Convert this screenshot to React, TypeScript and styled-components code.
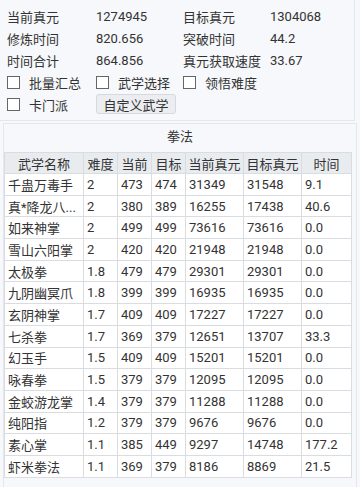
import styled, { createGlobalStyle } from 'styled-components';

const GlobalStyle = createGlobalStyle`
  body {
    margin: 0;
    background: #f6f8fb;
    font-family: Roboto, "Noto Sans CJK SC", sans-serif;
    color: #333;
  }
`;

const Page = styled.div`
  width: 360px;
  height: 487px;
  overflow: hidden;
`;

const TopPanel = styled.div`
  width: 347px;
  padding: 5px 0 5px 7px;
  border-right: 1px solid #e4e7eb;
  border-bottom: 1px solid #e4e7eb;
  display: grid;
  grid-template-columns: 89px 87px 87px 1fr;
  grid-auto-rows: 22px;
  font-size: 13px;
  align-items: center;
`;

const Cell = styled.div`
  white-space: nowrap;
`;

const Check = styled.label`
  display: flex;
  align-items: center;
  gap: 9px;
  white-space: nowrap;
  grid-column: span ${p => p.$span || 1};
`;

const Box = styled.span`
  width: 11px;
  height: 11px;
  border: 1px solid #666;
  background: #fff;
  flex-shrink: 0;
`;

const Button = styled.button`
  font: inherit;
  font-size: 13px;
  color: #333;
  height: 20px;
  width: 80px;
  padding: 0;
  background: #ebedf0;
  border: 1px solid #d5d8dc;
  border-radius: 3px;
  justify-self: start;
`;

const Section = styled.div`
  margin: 2px 3px 0 3px;
  border: 1px solid #e4e7eb;
  height: 380px;
`;

const Title = styled.div`
  height: 28px;
  line-height: 26px;
  text-align: center;
  font-size: 13px;
`;

const Table = styled.table`
  border-collapse: collapse;
  table-layout: fixed;
  width: 347px;
  font-size: 13px;
  background: #fff;
`;

const Th = styled.th`
  font-weight: normal;
  background: #e9ecef;
  border: 1px solid #d9dde1;
  height: 20px;
  padding: 0;
  text-align: center;
  white-space: nowrap;
`;

const Td = styled.td`
  border: 1px solid #d9dde1;
  height: 20.7px;
  padding: 0 3px;
  white-space: nowrap;
  overflow: hidden;
`;

const widths = [79, 34, 34, 34, 58, 58, 50];
const heads = ['武学名称', '难度', '当前', '目标', '当前真元', '目标真元', '时间'];

const rows = [
  ['千蛊万毒手', '2', '473', '474', '31349', '31548', '9.1'],
  ['真*降龙八...', '2', '380', '389', '16255', '17438', '40.6'],
  ['如来神掌', '2', '499', '499', '73616', '73616', '0.0'],
  ['雪山六阳掌', '2', '420', '420', '21948', '21948', '0.0'],
  ['太极拳', '1.8', '479', '479', '29301', '29301', '0.0'],
  ['九阴幽冥爪', '1.8', '399', '399', '16935', '16935', '0.0'],
  ['玄阴神掌', '1.7', '409', '409', '17227', '17227', '0.0'],
  ['七杀拳', '1.7', '369', '379', '12651', '13707', '33.3'],
  ['幻玉手', '1.5', '409', '409', '15201', '15201', '0.0'],
  ['咏春拳', '1.5', '379', '379', '12095', '12095', '0.0'],
  ['金蛟游龙掌', '1.4', '379', '379', '11288', '11288', '0.0'],
  ['纯阳指', '1.2', '379', '379', '9676', '9676', '0.0'],
  ['素心掌', '1.1', '385', '449', '9297', '14748', '177.2'],
  ['虾米拳法', '1.1', '369', '379', '8186', '8869', '21.5'],
];

export default function App() {
  return (
    <Page>
      <GlobalStyle />
      <TopPanel>
        <Cell>当前真元</Cell>
        <Cell>1274945</Cell>
        <Cell>目标真元</Cell>
        <Cell>1304068</Cell>
        <Cell>修炼时间</Cell>
        <Cell>820.656</Cell>
        <Cell>突破时间</Cell>
        <Cell>44.2</Cell>
        <Cell>时间合计</Cell>
        <Cell>864.856</Cell>
        <Cell>真元获取速度</Cell>
        <Cell>33.67</Cell>
        <Check><Box />批量汇总</Check>
        <Check><Box />武学选择</Check>
        <Check $span={2}><Box />领悟难度</Check>
        <Check><Box />卡门派</Check>
        <Button>自定义武学</Button>
      </TopPanel>
      <Section>
        <Title>拳法</Title>
        <Table>
          <colgroup>
            {widths.map((w, i) => <col key={i} style={{ width: w }} />)}
          </colgroup>
          <thead>
            <tr>{heads.map(h => <Th key={h}>{h}</Th>)}</tr>
          </thead>
          <tbody>
            {rows.map(r => (
              <tr key={r[0]}>{r.map((c, i) => <Td key={i}>{c}</Td>)}</tr>
            ))}
          </tbody>
        </Table>
      </Section>
    </Page>
  );
}
